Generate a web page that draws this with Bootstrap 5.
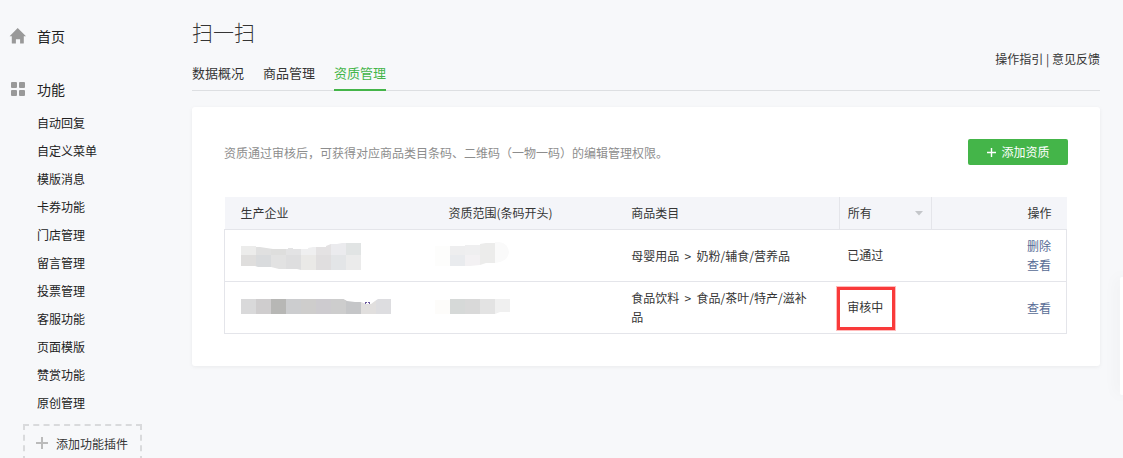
<!DOCTYPE html>
<html lang="zh-CN">
<head>
<meta charset="utf-8">
<meta name="viewport" content="width=device-width, initial-scale=1">
<title>扫一扫</title>
<link href="https://cdn.jsdelivr.net/npm/bootstrap@5.3.0/dist/css/bootstrap.min.css" rel="stylesheet">
<style>
body { font-family: "Noto Sans CJK SC", sans-serif; font-size: 12px; line-height: 19px; color: #353535; background: #f7f8fa; }
a { color: inherit; text-decoration: none; }
.side { width: 168px; padding-top: 22px; }
.side-head { font-size: 14px; line-height: 28px; color: #222; gap: 10px; padding-left: 9px; }
.side-list { padding: 6px 0 0 37px; line-height: 28px; color: #222; }
.side-group { margin-top: 25px; }
.add-plugin { margin: 7px 0 0 23px; width: 119px; height: 38px; border: 2px dashed #d9dadc; gap: 8px; padding: 0 0 0 11px; background: none; color: #353535; }
.content-area { padding: 15px 23px 0 24px; }
.page-title { font-size: 21px; line-height: 32px; font-weight: 300; margin: 0; }
.tab-bar { border-bottom: 1px solid #dddfe2; margin-bottom: 16px; }
.tab-set { gap: 19px; font-size: 13px; line-height: 20px; padding-top: 16px; }
.tab-set a { padding-bottom: 6px; margin-bottom: -1px; border-bottom: 2px solid transparent; }
.tab-set a.active { color: #44b549; border-color: #44b549; }
.help-links { margin-bottom: 22px; }
.panel { background: #fff; border-radius: 3px; padding: 32px; box-shadow: 0 1px 4px rgba(0,0,0,.06); }
.hint { color: #8d8d8d; }
.btn-add { background: #44b549; color: #fff; border: 0; border-radius: 2px; width: 100px; height: 26px; font-size: 12px; line-height: 26px; gap: 4px; }
.btn-add:hover { background: #2f9833; color: #fff; }
.quals { table-layout: fixed; margin: 32px 0 0; }
.quals-wrap { padding-right: 1px; }
.quals tbody { border: 1px solid #e4e5ea; border-width: 0 1px 1px; }
.quals th { font-weight: 400; background: #f4f5f9; height: 32px; padding: 0 15px 2px 16px; }
.quals td { height: 52px; padding: 6px 15px 7px 16px; border-top: 1px solid #e4e5ea; vertical-align: middle; }
.quals .c-state { padding: 0 0 2px 8px; }
.quals th.c-state { border: solid #e4e5ea; border-width: 0 1px; }
.c-op { text-align: right; }
.c-op a { color: #576b95; display: block; }
.filter { width: 100%; height: 30px; padding: 0 8px 0 0; border: 0; appearance: none; background: none; color: inherit; font: inherit; }
.caret { right: 8px; top: 14px; pointer-events: none; }
.marked::after { content: ""; position: absolute; inset: -11px -12px -15px -10px; border: 3px solid #f93a3a; box-shadow: 0 0 0 1px #fbb; }
.float-tab { position: fixed; right: 0; top: 60.5vh; width: 3px; height: 118px; background: #fff; border-radius: 2px 0 0 2px; box-shadow: 0 0 16px rgba(0,0,0,.12); }
</style>
</head>
<body class="vh-100 overflow-hidden">
<div class="d-flex">
  <nav class="side flex-shrink-0">
    <a href="#" class="side-head d-flex align-items-center">
      <svg width="18" height="18" viewBox="0 0 18 18" fill="#999"><path d="M8.7 1 17 9.2h-2.2V16q0 .6-.6.6h-3.1v-4.4H6.9v4.4H3.4q-.6 0-.6-.6V9.2H.6z"/></svg>
      <span>首页</span>
    </a>
    <div class="side-group">
      <div class="side-head d-flex align-items-center">
        <svg width="18" height="18" viewBox="0 0 18 18" fill="#999"><rect x="2" y="2" width="6" height="6" rx="1"/><rect x="10" y="2" width="6" height="6" rx="1"/><rect x="2" y="10" width="6" height="6" rx="1"/><rect x="10" y="10" width="6" height="6" rx="1"/></svg>
        <span>功能</span>
      </div>
      <ul class="side-list list-unstyled mb-0">
        <li><a href="#">自动回复</a></li>
        <li><a href="#">自定义菜单</a></li>
        <li><a href="#">模版消息</a></li>
        <li><a href="#">卡券功能</a></li>
        <li><a href="#">门店管理</a></li>
        <li><a href="#">留言管理</a></li>
        <li><a href="#">投票管理</a></li>
        <li><a href="#">客服功能</a></li>
        <li><a href="#">页面模版</a></li>
        <li><a href="#">赞赏功能</a></li>
        <li><a href="#">原创管理</a></li>
      </ul>
      <button type="button" class="add-plugin d-flex align-items-center">
        <svg width="12" height="12" viewBox="0 0 12 12" fill="#bbb"><path d="M5 0h2v5h5v2H7v5H5V7H0V5h5z"/></svg>
        <span>添加功能插件</span>
      </button>
    </div>
  </nav>

  <main class="content-area flex-grow-1">
    <h1 class="page-title">扫一扫</h1>
    <div class="tab-bar d-flex justify-content-between align-items-end">
      <nav class="tab-set d-flex">
        <a href="#">数据概况</a>
        <a href="#">商品管理</a>
        <a href="#" class="active">资质管理</a>
      </nav>
      <div class="help-links"><a href="#">操作指引</a> | <a href="#">意见反馈</a></div>
    </div>

    <section class="panel">
      <div class="d-flex justify-content-between align-items-center">
        <span class="hint">资质通过审核后，可获得对应商品类目条码、二维码（一物一码）的编辑管理权限。</span>
        <button type="button" class="btn btn-add d-flex align-items-center justify-content-center p-0">
          <svg width="11" height="11" viewBox="0 0 11 11" stroke="#fff" stroke-width="1.4"><path d="M5.5 1v9M1 5.5h9"/></svg>
          <span>添加资质</span>
        </button>
      </div>

      <div class="quals-wrap">
      <table class="quals w-100">
        <colgroup><col style="width:24.7%"><col style="width:21.7%"><col style="width:26.6%"><col style="width:11%"><col style="width:16%"></colgroup>
        <thead>
          <tr>
            <th>生产企业</th>
            <th>资质范围(条码开头)</th>
            <th>商品类目</th>
            <th class="c-state">
              <div class="position-relative">
                <select class="filter d-block" aria-label="状态"><option>所有</option><option>已通过</option><option>审核中</option></select>
                <svg class="caret position-absolute" width="8" height="5" viewBox="0 0 8 5" fill="#c4c6ca"><path d="M0 0h8L4 4.5z"/></svg>
              </div>
            </th>
            <th class="c-op">操作</th>
          </tr>
        </thead>
        <tbody>
          <tr>
            <td>
              <svg class="d-block overflow-visible" width="130" height="24" viewBox="0 0 130 24">
                <clipPath id="m1"><path d="M0 3h15v1h4l13 2h15V5h5v1h15V5l5-1h13V3l5-2h6l5-1h19v27H60l-4-1H38l-8-2H17l-3-1H0z"/></clipPath>
                <g clip-path="url(#m1)">
                  <path fill="#ececeb" d="M0 0h15v12H0z"/><path fill="#dfdedd" d="M0 12h15v15H0z"/>
                  <path fill="#e0e0e0" d="M15 0h15v12H15z"/><path fill="#d9dbdd" d="M15 12h15v15H15z"/>
                  <path fill="#dededd" d="M30 0h15v12H30z"/><path fill="#e2e2e2" d="M30 12h15v15H30z"/>
                  <path fill="#e3e3e4" d="M45 0h15v12H45z"/><path fill="#dededf" d="M45 12h15v15H45z"/>
                  <path fill="#efeff0" d="M60 0h15v12H60z"/><path fill="#eae9e7" d="M60 12h15v15H60z"/>
                  <path fill="#e4e2e3" d="M75 0h15v12H75z"/><path fill="#e0dedf" d="M75 12h15v15H75z"/>
                  <path fill="#ebebee" d="M90 0h15v12H90z"/><path fill="#e3e5e7" d="M90 12h15v15H90z"/>
                  <path fill="#e1e4e4" d="M105 0h15v12h-15z"/><path fill="#ebebeb" d="M105 12h15v15h-15z"/>
                </g>
              </svg>
            </td>
            <td>
              <svg class="d-block overflow-visible" width="62" height="24" viewBox="0 0 62 24">
                <path fill="#fdfdfc" d="M-13 3H2v20h-15z"/>
                <path fill="#eeeeef" d="M2 3h15v9H2z"/><path fill="#e9ebee" d="M2 12h15v11H2z"/>
                <path fill="#efeff0" d="M17 2h15v10H17z"/><path fill="#f3f1f3" d="M17 12h15v10l-10 1h-5z"/>
                <path fill="#ececeb" d="M32 1l6-1h9v20h-9l-6 2z"/><path fill="#fafafa" d="M47-1h4q9 1 10 10-1 10-14 11z"/>
              </svg>
            </td>
            <td>母婴用品 &nbsp;&gt;&nbsp; 奶粉/辅食/营养品</td>
            <td class="c-state">已通过</td>
            <td class="c-op"><a href="#">删除</a><a href="#">查看</a></td>
          </tr>
          <tr>
            <td>
              <svg class="d-block" width="150" height="18" viewBox="0 0 150 18">
                <clipPath id="m2"><path d="M0 1h102l4 2 8 1h6l5 2h5l4-3 3-2h13v15H0z"/></clipPath>
                <g clip-path="url(#m2)">
                  <path fill="#d9d9da" d="M0 0h15v16H0z"/><path fill="#cfcdce" d="M15 0h15v16H15z"/>
                  <path fill="#b7b7b5" d="M30 0h15v16H30z"/><path fill="#cccdcf" d="M45 0h15v16H45z"/>
                  <path fill="#cecdcc" d="M60 0h15v16H60z"/><path fill="#cdcbcf" d="M75 0h30v16H75z"/>
                  <path fill="#cdcdcd" d="M90 0h15v16H90z"/><path fill="#c5c6c8" d="M105 0h15v16h-15z"/>
                  <path fill="#e1dfde" d="M120 0h15v16h-15z"/><path fill="#dddde0" d="M135 0h15v16h-15z"/>
                </g>
                <path fill="#6c5a9e" d="M124 4h2v1h-1v1h-1zM127 4h2v2h-1V5h-1z"/>
              </svg>
            </td>
            <td>
              <svg class="d-block overflow-visible" width="62" height="18" viewBox="0 0 62 18">
                <path fill="#fdfcfa" d="M-13 2H2v14h-15z"/><path fill="#d6d9d8" d="M2 1h15v15H2z"/>
                <path fill="#d9d9d9" d="M17 1h15v15H17z"/><path fill="#e3e3e3" d="M32 1h15v15H32z"/>
                <path fill="#f0f0f0" d="M47 1h15v13H52l-5 2z"/>
              </svg>
            </td>
            <td class="pe-4">食品饮料 &nbsp;&gt;&nbsp; 食品/茶叶/特产/滋补品</td>
            <td class="c-state"><span class="marked position-relative">审核中</span></td>
            <td class="c-op"><a href="#">查看</a></td>
          </tr>
        </tbody>
      </table>
      </div>
    </section>
  </main>
</div>
<aside class="float-tab"></aside>
<script src="https://cdn.jsdelivr.net/npm/bootstrap@5.3.0/dist/js/bootstrap.bundle.min.js"></script>
</body>
</html>
